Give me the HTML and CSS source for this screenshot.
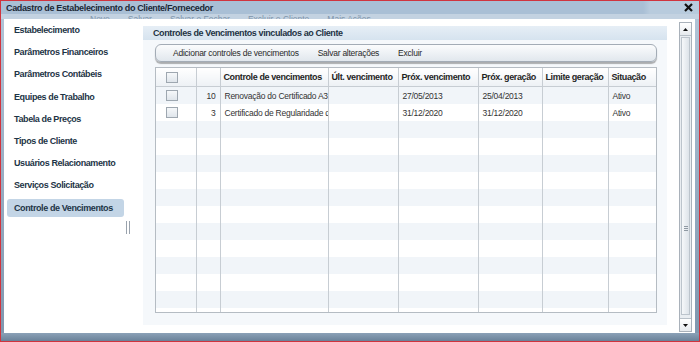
FILE: index.html
```html
<!DOCTYPE html>
<html lang="pt-BR">
<head>
    <meta charset="UTF-8">
    <title>Cadastro de Estabelecimento do Cliente/Fornecedor</title>
    <link rel="stylesheet" href="styles.css">
</head>
<body>

<div class="window">
    <div class="titlebar">
        <span class="title">Cadastro de Estabelecimento do Cliente/Fornecedor</span>
        <svg class="close" width="9" height="9" viewBox="0 0 9 9"><path d="M1 1L8 8M8 1L1 8" stroke="#111" stroke-width="2.2"/></svg>
    </div>
    <div class="backdrop">
        <span>Novo</span><span>Salvar</span><span>Salvar e Fechar</span><span>Excluir o Cliente</span><span>Mais Ações</span>
    </div>

    <div class="dialog">
        <div class="sidebar">
            <ul class="nav">
                <li>Estabelecimento</li>
                <li>Parâmetros Financeiros</li>
                <li>Parâmetros Contábeis</li>
                <li>Equipes de Trabalho</li>
                <li>Tabela de Preços</li>
                <li>Tipos de Cliente</li>
                <li>Usuários Relacionamento</li>
                <li>Serviços Solicitação</li>
                <li class="active">Controle de Vencimentos</li>
            </ul>
            <div class="handle"></div>
        </div>

        <div class="panel">
            <div class="panel-head">Controles de Vencimentos vinculados ao Cliente</div>
            <div class="toolbar">
                <span>Adicionar controles de vencimentos</span>
                <span>Salvar alterações</span>
                <span>Excluir</span>
            </div>
            <div class="grid-wrap">
                <table class="grid">
                    <colgroup>
                        <col style="width: 40px">
                        <col style="width: 24px">
                        <col style="width: 108px">
                        <col style="width: 70px">
                        <col style="width: 80px">
                        <col style="width: 64px">
                        <col style="width: 66px">
                        <col>
                    </colgroup>
                    <thead>
                        <tr>
                            <th><span class="check"></span></th>
                            <th></th>
                            <th>Controle de vencimentos</th>
                            <th>Últ. vencimento</th>
                            <th>Próx. vencimento</th>
                            <th>Próx. geração</th>
                            <th>Limite geração</th>
                            <th>Situação</th>
                        </tr>
                    </thead>
                    <tbody id="gridBody">
                        <tr>
                            <td><span class="check"></span></td>
                            <td class="num">10</td>
                            <td>Renovação do Certificado A3</td>
                            <td></td>
                            <td>27/05/2013</td>
                            <td>25/04/2013</td>
                            <td></td>
                            <td>Ativo</td>
                        </tr>
                        <tr>
                            <td><span class="check"></span></td>
                            <td class="num">3</td>
                            <td>Certificado de Regularidade do FGTS</td>
                            <td></td>
                            <td>31/12/2020</td>
                            <td>31/12/2020</td>
                            <td></td>
                            <td>Ativo</td>
                        </tr>
                        <tr><td></td><td></td><td></td><td></td><td></td><td></td><td></td><td></td></tr>
                        <tr><td></td><td></td><td></td><td></td><td></td><td></td><td></td><td></td></tr>
                        <tr><td></td><td></td><td></td><td></td><td></td><td></td><td></td><td></td></tr>
                        <tr><td></td><td></td><td></td><td></td><td></td><td></td><td></td><td></td></tr>
                        <tr><td></td><td></td><td></td><td></td><td></td><td></td><td></td><td></td></tr>
                        <tr><td></td><td></td><td></td><td></td><td></td><td></td><td></td><td></td></tr>
                        <tr><td></td><td></td><td></td><td></td><td></td><td></td><td></td><td></td></tr>
                        <tr><td></td><td></td><td></td><td></td><td></td><td></td><td></td><td></td></tr>
                        <tr><td></td><td></td><td></td><td></td><td></td><td></td><td></td><td></td></tr>
                        <tr><td></td><td></td><td></td><td></td><td></td><td></td><td></td><td></td></tr>
                        <tr><td></td><td></td><td></td><td></td><td></td><td></td><td></td><td></td></tr>
                        <tr><td></td><td></td><td></td><td></td><td></td><td></td><td></td><td></td></tr>
                    </tbody>
                </table>
            </div>
        </div>

        <div class="scrollbar">
            <div class="sb-btn"><svg width="5" height="3" viewBox="0 0 5 3"><path d="M0 3L2.5 0L5 3Z" fill="#111"/></svg></div>
            <div class="sb-thumb"><div class="grip"></div></div>
            <div class="sb-btn down"><svg width="5" height="3" viewBox="0 0 5 3"><path d="M0 0L2.5 3L5 0Z" fill="#111"/></svg></div>
        </div>
    </div>

    <div class="bottom"></div>
</div>

</body>
</html>
```

FILE: styles.css
```css
body {
    margin: 0;
    font-family: "Liberation Sans", Arial, sans-serif;
}
.window {
    width: 700px;
    height: 342px;
    box-sizing: border-box;
    border: 1px solid #d0343e;
    background: linear-gradient(#b3c6d9, #7f96ae);
    display: flex;
    flex-direction: column;
    overflow: hidden;
}
.titlebar {
    height: 13px;
    display: flex;
    align-items: center;
    padding: 0 6px 0 5px;
    background: linear-gradient(90deg, #a9bfd5 0%, #a9bfd5 92%, #b8cbdd 93%);
}
.title {
    font-size: 9px;
    font-weight: bold;
    letter-spacing: -0.35px;
    color: #1b2836;
}
.close {
    margin-left: auto;
}
.backdrop {
    height: 5px;
    overflow: hidden;
    background: #c3d2e1;
    display: flex;
    gap: 18px;
    padding-left: 89px;
    font-size: 8.5px;
    line-height: 10px;
    color: #7f95ab;
}
.dialog {
    height: 314px;
    margin: 0 4px 0 3px;
    background: #fff;
    display: flex;
}
.sidebar {
    width: 136px;
}
.nav {
    list-style: none;
    margin: 0;
    padding: 2px 0 0 3px;
}
.nav li {
    width: 117px;
    height: 18px;
    line-height: 18px;
    margin-bottom: 4.2px;
    padding-left: 7px;
    box-sizing: border-box;
    border-radius: 3px;
    font-size: 9px;
    font-weight: bold;
    letter-spacing: -0.4px;
    color: #1d3446;
    white-space: nowrap;
}
.nav li.active {
    background-color: #c3d5e6;
}
.handle {
    margin: 2px 0 0 122px;
    width: 2px;
    height: 13px;
    border-left: 1px solid #9aa3ad;
    border-right: 1px solid #9aa3ad;
}
.panel {
    width: 524px;
    margin: 7px 0 8px 3px;
    background: #f5f8fb;
}
.panel-head {
    height: 14px;
    line-height: 14px;
    padding-left: 10px;
    background: linear-gradient(#e6eef6, #d6e3ef);
    font-size: 9px;
    font-weight: bold;
    letter-spacing: -0.4px;
    color: #1e3344;
}
.toolbar {
    height: 18px;
    box-sizing: border-box;
    margin: 4px 10px 0 12px;
    padding-left: 17px;
    border: 1px solid #a3acb6;
    border-radius: 6px;
    background: linear-gradient(#fbfcfd, #e1e7ed);
    box-shadow: 0 2px 1px rgba(0, 0, 0, 0.3);
    display: flex;
    align-items: center;
    gap: 19px;
    font-size: 8.5px;
    letter-spacing: -0.25px;
    color: #2a2a2a;
}
.grid-wrap {
    height: 246px;
    box-sizing: border-box;
    margin: 5px 10px 0 12px;
    border: 1px solid #b5bcc3;
    background: #fff;
    overflow: hidden;
}
.grid {
    width: 100%;
    border-collapse: collapse;
    table-layout: fixed;
}
.grid th {
    height: 18px;
    padding: 0 3px;
    text-align: left;
    background: linear-gradient(#ffffff, #edf1f5);
    border-right: 1px solid #c7cdd3;
    border-bottom: 1px solid #c7cdd3;
    font-size: 9px;
    font-weight: bold;
    letter-spacing: -0.4px;
    color: #1f1f1f;
    white-space: nowrap;
    overflow: hidden;
}
.grid td {
    height: 17px;
    padding: 0 5px 0 4px;
    border-right: 1px solid #c7cdd3;
    font-size: 8.5px;
    letter-spacing: -0.25px;
    color: #333;
    white-space: nowrap;
    overflow: hidden;
}
.grid th:last-child, .grid td:last-child {
    border-right: none;
}
.grid tbody tr:nth-child(odd) {
    background-color: #f1f5f9;
}
.grid th:first-child, .grid td:first-child {
    padding-left: 10px;
}
.grid td.num {
    text-align: right;
    padding-right: 4px;
}
.check {
    display: block;
    width: 10px;
    height: 9px;
    border: 1px solid #9ea7b0;
    background: linear-gradient(#f6f8fa, #dfe5eb);
}
.scrollbar {
    width: 13px;
    box-sizing: border-box;
    margin: 3px 3px 1px 12px;
    border: 1px solid #a9b1ba;
    background: #e9edf1;
    display: flex;
    flex-direction: column;
}
.sb-btn {
    height: 12px;
    display: flex;
    align-items: center;
    justify-content: center;
    background: linear-gradient(#ffffff, #e6eaee);
    border-bottom: 1px solid #b8c0c8;
}
.sb-btn.down {
    border-bottom: none;
    border-top: 1px solid #b8c0c8;
}
.sb-thumb {
    flex: 1;
    margin: 1px 1px 3px 1px;
    border: 1px solid #bcc4cc;
    background: linear-gradient(90deg, #f6f8fa, #dde3e9);
    display: flex;
    justify-content: center;
}
.grip {
    margin-top: 188px;
    width: 4px;
    height: 6px;
    background: repeating-linear-gradient(#8f99a3 0, #8f99a3 1px, transparent 1px, transparent 2px);
}
.bottom {
    flex: 1;
    background: linear-gradient(#8ba1b7, #6a8299);
}
```
